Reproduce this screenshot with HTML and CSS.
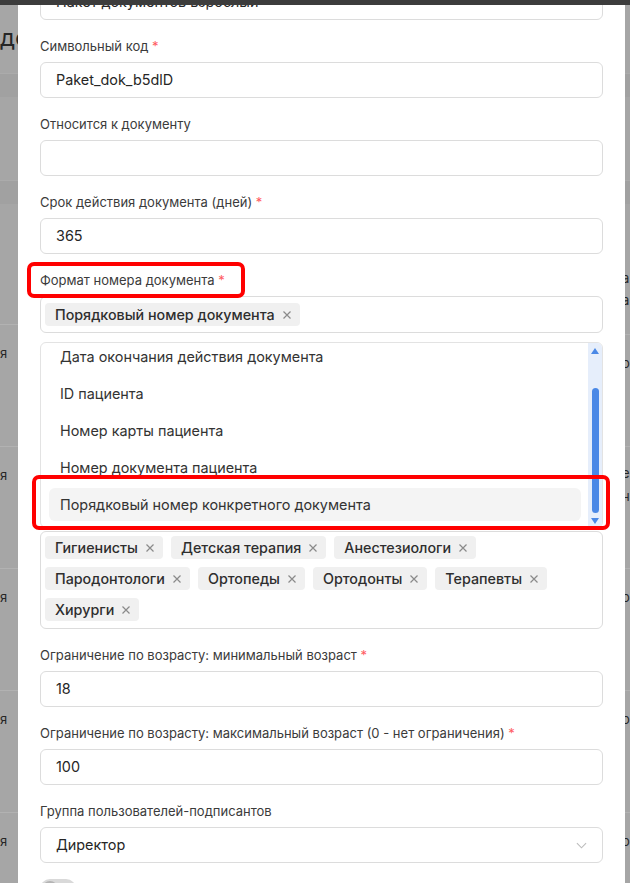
FILE: index.html
```html
<!DOCTYPE html>
<html lang="ru">
<head>
<meta charset="utf-8">
<title>Шаблон документа</title>
<link rel="stylesheet" href="styles.css">
</head>
<body>
<div class="topbar"></div>
<div class="screen">
  <aside class="bg bg-left">
    <div class="bg-title">до</div>
    <div class="bg-thead"></div>
    <div class="bg-space"></div>
    <div class="bg-thead"></div>
    <div class="bg-row bg-row-first"></div>
    <div class="bg-row"><span>я</span></div>
    <div class="bg-row"><span>я</span></div>
    <div class="bg-row"><span>я</span></div>
    <div class="bg-row"><span>я</span></div>
    <div class="bg-row"><span>я</span></div>
  </aside>

  <main class="modal">
    <div class="modal-body">
      <div class="field">
        <div class="label">Название <span class="req">*</span></div>
        <div class="input">Пакет документов взрослый</div>
      </div>
      <div class="field">
        <div class="label">Символьный код <span class="req">*</span></div>
        <div class="input">Paket_dok_b5dlD</div>
      </div>
      <div class="field">
        <div class="label">Относится к документу</div>
        <div class="input"></div>
      </div>
      <div class="field">
        <div class="label">Срок действия документа (дней) <span class="req">*</span></div>
        <div class="input">365</div>
      </div>
      <div class="field">
        <div class="label label-marked">Формат номера документа <span class="req">*</span><span class="mark mark-label"></span></div>
        <div class="ms-wrap">
          <div class="input multi">
            <span class="tag">Порядковый номер документа <svg class="x" viewBox="0 0 10 10"><path d="M1.5 1.5l7 7M8.5 1.5l-7 7"/></svg></span>
          </div>
          <div class="dropdown">
            <div class="opts">
              <div class="opt">Дата окончания действия документа</div>
              <div class="opt">ID пациента</div>
              <div class="opt">Номер карты пациента</div>
              <div class="opt">Номер документа пациента</div>
              <div class="opt opt-active">Порядковый номер конкретного документа</div>
            </div>
            <div class="sbar">
              <span class="sbar-up"></span>
              <span class="sbar-thumb"></span>
              <span class="sbar-down"></span>
            </div>
          </div>
          <span class="mark mark-option"></span>
        </div>
      </div>
      <div class="field">
        <div class="label">Тип документа</div>
        <div class="input"></div>
      </div>
      <div class="field">
        <div class="label">Шаблон</div>
        <div class="input"></div>
      </div>
      <div class="field field-tags">
        <div class="label">Специализации</div>
        <div class="tags-box">
          <span class="tag">Гигиенисты <svg class="x" viewBox="0 0 10 10"><path d="M1.5 1.5l7 7M8.5 1.5l-7 7"/></svg></span>
          <span class="tag">Детская терапия <svg class="x" viewBox="0 0 10 10"><path d="M1.5 1.5l7 7M8.5 1.5l-7 7"/></svg></span>
          <span class="tag">Анестезиологи <svg class="x" viewBox="0 0 10 10"><path d="M1.5 1.5l7 7M8.5 1.5l-7 7"/></svg></span>
          <span class="tag">Пародонтологи <svg class="x" viewBox="0 0 10 10"><path d="M1.5 1.5l7 7M8.5 1.5l-7 7"/></svg></span>
          <span class="tag">Ортопеды <svg class="x" viewBox="0 0 10 10"><path d="M1.5 1.5l7 7M8.5 1.5l-7 7"/></svg></span>
          <span class="tag">Ортодонты <svg class="x" viewBox="0 0 10 10"><path d="M1.5 1.5l7 7M8.5 1.5l-7 7"/></svg></span>
          <span class="tag">Терапевты <svg class="x" viewBox="0 0 10 10"><path d="M1.5 1.5l7 7M8.5 1.5l-7 7"/></svg></span>
          <span class="tag">Хирурги <svg class="x" viewBox="0 0 10 10"><path d="M1.5 1.5l7 7M8.5 1.5l-7 7"/></svg></span>
        </div>
      </div>
      <div class="field">
        <div class="label">Ограничение по возрасту: минимальный возраст <span class="req">*</span></div>
        <div class="input">18</div>
      </div>
      <div class="field">
        <div class="label">Ограничение по возрасту: максимальный возраст (0 - нет ограничения) <span class="req">*</span></div>
        <div class="input">100</div>
      </div>
      <div class="field">
        <div class="label">Группа пользователей-подписантов</div>
        <div class="input select">
          <span>Директор</span>
          <svg class="chev" viewBox="0 0 12 7"><path d="M1 1l5 5 5-5"/></svg>
        </div>
      </div>
      <div class="field">
        <span class="toggle"><span class="knob"></span></span>
      </div>
    </div>
  </main>

  <aside class="bg bg-right">
    <div class="bg-title"></div>
    <div class="bg-thead"></div>
    <div class="bg-space"></div>
    <div class="bg-thead"></div>
    <div class="bg-row r-first"><span>а</span><span>а</span></div>
    <div class="bg-row r-a"><span>о</span></div>
    <div class="bg-row r-b"><span>е</span><span>н</span></div>
    <div class="bg-row"><span>о</span></div>
    <div class="bg-row"><span>о</span></div>
    <div class="bg-row"><span>о</span></div>
  </aside>
</div>
</body>
</html>
```

FILE: styles.css
```css
html, body {
  margin: 0;
  padding: 0;
}
body {
  width: 630px;
  height: 883px;
  overflow: hidden;
  background: #a6a6a6;
  font-family: Inter, "Noto Sans", sans-serif;
  position: relative;
}
.topbar {
  position: absolute;
  top: 0;
  left: 0;
  right: 0;
  height: 5px;
  background: #3c3c3c;
  z-index: 10;
}
.screen {
  display: flex;
  height: 883px;
}

/* backdrop */
.bg {
  overflow: hidden;
  background: #a6a6a6;
  color: #262626;
  font-size: 13px;
}
.bg-left {
  width: 18px;
  flex: none;
}
.bg-right {
  flex: 1;
  min-width: 0;
}
.bg-title {
  height: 73px;
  box-sizing: border-box;
  padding-top: 24px;
  font-size: 24px;
  line-height: 28px;
  font-weight: 400;
  color: #262626;
  white-space: nowrap;
}
.bg-thead {
  height: 24px;
  background: #a1a1a1;
  border-top: 1px solid #ababab;
  box-sizing: border-box;
}
.bg-space {
  height: 83px;
}
.bg-row {
  height: 122px;
  box-sizing: border-box;
  border-top: 1px solid #b2b2b2;
  padding-top: 18px;
  line-height: 20px;
  display: flex;
  flex-direction: column;
}
.bg-row-first {
  height: 120px;
  border-top: none;
}
.bg-right .bg-row {
  margin-left: -3px;
}
.bg-right .r-first {
  height: 130px;
  border-top: none;
  padding-top: 64px;
  gap: 2px;
}
.bg-right .r-a {
  height: 112px;
}
.bg-right .r-b {
  padding-top: 16px;
  gap: 3px;
}

/* modal */
.modal {
  width: 607px;
  flex: none;
  background: #ffffff;
  overflow: hidden;
  position: relative;
  z-index: 1;
}
.modal-body {
  padding: 0 22px;
  margin-top: -42px;
}
.field {
  margin-bottom: 16px;
}
.label {
  font-size: 13px;
  line-height: 20px;
  color: #3b3b3b;
  margin-bottom: 6px;
  white-space: nowrap;
}
.req {
  color: #ff5a5f;
}
.label-marked {
  position: relative;
}
.mark {
  position: absolute;
  border: 4px solid #ff0000;
  border-radius: 7px;
  box-sizing: border-box;
  pointer-events: none;
  z-index: 5;
}
.mark-label {
  left: -13px;
  top: -8px;
  width: 218px;
  height: 36px;
}
.input {
  height: 36px;
  box-sizing: border-box;
  border: 1px solid #dcdcdc;
  border-radius: 6px;
  padding: 0 15px;
  font-size: 14.4px;
  line-height: 34px;
  color: #262626;
  white-space: nowrap;
}
.multi {
  display: flex;
  align-items: center;
  padding: 0 4px;
  height: 37px;
}
.tag {
  display: inline-flex;
  align-items: center;
  gap: 7px;
  height: 23px;
  padding: 0 8px 0 10px;
  background: #f0f0f0;
  border-radius: 4px;
  font-size: 14.3px;
  font-weight: 500;
  color: #2e2e2e;
  line-height: 23px;
  white-space: nowrap;
}
.x {
  width: 10px;
  height: 10px;
  flex: none;
  fill: none;
  stroke: #8a8a8a;
  stroke-width: 1.2;
}

/* dropdown */
.ms-wrap {
  position: relative;
}
.dropdown {
  position: absolute;
  left: 0;
  right: 0;
  top: 46px;
  height: 186px;
  box-sizing: border-box;
  border: 1px solid #e3e3e3;
  border-radius: 6px;
  background: #fff;
  display: flex;
  overflow: hidden;
  z-index: 3;
}
.opts {
  flex: 1;
  padding: 0 7px 0 8px;
  margin-top: -3px;
}
.opt {
  height: 33px;
  margin-bottom: 4px;
  padding-left: 11px;
  border-radius: 6px;
  font-size: 14.4px;
  line-height: 33px;
  color: #333333;
  white-space: nowrap;
}
.opt-active {
  background: #f4f4f4;
}
.sbar {
  width: 14px;
  flex: none;
  background: #e6eefb;
  position: relative;
  display: flex;
  flex-direction: column;
  align-items: center;
}
.sbar-up {
  margin-top: 5px;
  width: 0;
  height: 0;
  border-left: 4px solid transparent;
  border-right: 4px solid transparent;
  border-bottom: 6px solid #4a88e6;
}
.sbar-thumb {
  margin-top: 34px;
  width: 7px;
  height: 125px;
  border-radius: 4px;
  background: #4a88e6;
}
.sbar-down {
  margin-top: 5px;
  width: 0;
  height: 0;
  border-left: 4px solid transparent;
  border-right: 4px solid transparent;
  border-top: 6px solid #4a88e6;
}
.mark-option {
  left: -8px;
  top: 179px;
  width: 578px;
  height: 55px;
}

/* tags field */
.field-tags {
  margin-top: 2px;
}
.tags-box {
  display: flex;
  flex-wrap: wrap;
  gap: 8px 8px;
  padding: 4px 4px 5px;
  border: 1px solid #dcdcdc;
  border-radius: 6px;
  min-height: 98px;
  box-sizing: border-box;
  align-content: flex-start;
}

/* select */
.select {
  display: flex;
  align-items: center;
  justify-content: space-between;
}
.chev {
  width: 11px;
  height: 7px;
  fill: none;
  stroke: #bcbcbc;
  stroke-width: 1.2;
}

/* toggle */
.toggle {
  display: inline-block;
  width: 36px;
  height: 20px;
  border-radius: 10px;
  background: #d9d9d9;
  position: relative;
}
.knob {
  position: absolute;
  left: 2px;
  top: 2px;
  width: 16px;
  height: 16px;
  border-radius: 50%;
  background: #b4b4b4;
}
```
